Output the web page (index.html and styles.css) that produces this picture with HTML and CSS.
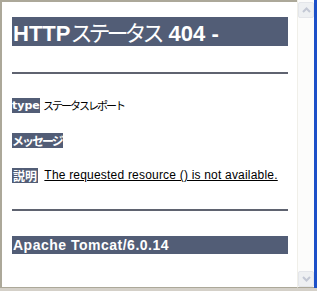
FILE: index.html
```html
<!DOCTYPE html>
<html lang="ja">
<head>
    <meta charset="UTF-8">
    <title>Apache Tomcat/6.0.14 - エラーレポート</title>
    <link rel="stylesheet" href="styles.css">
</head>
<body>
    <div class="window">
        <div class="page">
            <h1>HTTP<span class="jp">ステータス</span> 404 -</h1>
            <hr>
            <p><b>type</b> <span class="jp-text">ステータスレポート</span></p>
            <p><b class="jp-label">メッセージ</b> <u></u></p>
            <p><b class="jp-label wide">説明</b> <u>The requested resource () is not available.</u></p>
            <hr class="bottom-rule">
            <h3>Apache Tomcat/6.0.14</h3>
        </div>
        <div class="scrollbar">
            <div class="scroll-btn">
                <svg width="9" height="6" viewBox="0 0 9 6"><path d="M1 5 L4.5 1.5 L8 5" fill="none" stroke="#c3c8d4" stroke-width="2"/></svg>
            </div>
            <div class="scroll-track"></div>
            <div class="scroll-btn">
                <svg width="9" height="6" viewBox="0 0 9 6"><path d="M1 1 L4.5 4.5 L8 1" fill="none" stroke="#c3c8d4" stroke-width="2"/></svg>
            </div>
        </div>
        <div class="frame-edge"></div>
    </div>
</body>
</html>
```

FILE: styles.css
```css
body {
    margin: 0;
    background-color: #fff;
}
.window {
    width: 317px;
    height: 291px;
    display: flex;
    box-sizing: border-box;
    border-bottom: 3px solid #d4d0c8;
}
.page {
    flex: 1;
    box-sizing: border-box;
    border-top: 2px solid #aca899;
    border-left: 2px solid #aca899;
    border-bottom: 1px solid #aca899;
    padding: 15px 9px 0 10px;
    font-family: "Liberation Sans", Arial, sans-serif;
    font-size: 12px;
    color: #000;
    overflow: hidden;
}
h1 {
    margin: 0;
    height: 29px;
    line-height: 29px;
    padding-left: 1px;
    font-size: 22px;
    font-weight: bold;
    color: #fff;
    background-color: #525D76;
    white-space: nowrap;
}
h1 .jp {
    font-family: "Noto Sans CJK JP", sans-serif;
    font-weight: normal;
    letter-spacing: -4px;
    margin-right: 2px;
}
hr {
    margin: 26px 0 0 0;
    height: 0;
    border: none;
    border-top: 2px solid #5f6370;
}
p {
    margin: 20px 0 0 0;
    height: 15px;
    line-height: 15px;
    white-space: nowrap;
}
hr + p {
    margin-top: 24px;
}
b {
    display: inline-block;
    height: 15px;
    line-height: 15px;
    font-family: "DejaVu Sans", sans-serif;
    font-size: 11px;
    color: #fff;
    background-color: #525D76;
    vertical-align: top;
}
.jp-label {
    font-family: "Noto Sans CJK JP", sans-serif;
    font-size: 12px;
    letter-spacing: -2px;
    padding-right: 1px;
}
.jp-label.wide {
    letter-spacing: 0;
    padding: 0 1px;
}
.jp-text {
    font-family: "Noto Sans CJK JP", sans-serif;
    font-size: 11px;
    letter-spacing: -2px;
}
u {
    color: #000;
    letter-spacing: 0.2px;
    margin-left: 3px;
}
.bottom-rule {
    margin-top: 26px;
}
h3 {
    margin: 25px 0 0 0;
    height: 18px;
    line-height: 18px;
    padding-left: 1px;
    font-size: 14px;
    font-weight: bold;
    letter-spacing: 0.5px;
    color: #fff;
    background-color: #525D76;
}
.scrollbar {
    width: 16px;
    display: flex;
    flex-direction: column;
    padding-top: 2px;
    background-color: #fcfcfb;
    border-left: 1px solid #f0efe9;
    border-bottom: 1px solid #aca899;
}
.scroll-btn {
    height: 16px;
    display: flex;
    align-items: center;
    justify-content: center;
    background-color: #eef0f2;
    border: 1px solid #e4e6ea;
    border-radius: 2px;
    box-sizing: border-box;
}
.scroll-track {
    flex: 1;
}
.frame-edge {
    width: 3px;
    background-color: #1c50c8;
}
```
